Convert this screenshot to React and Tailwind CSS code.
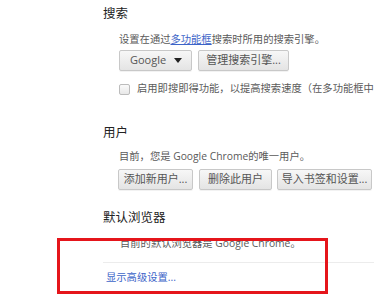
export default function App() {
  const font = { fontFamily: '"Open Sans", "Noto Sans CJK SC", sans-serif' };
  const btn =
    "h-[21px] flex items-center rounded-[2px] border border-[#c8c8c8] bg-gradient-to-b from-[#f7f7f7] to-[#e4e4e4] text-[11px] text-[#555] shadow-[0_1px_0_rgba(0,0,0,0.05)]";

  return (
    <div className="relative w-[374px] h-[302px] bg-white overflow-hidden" style={font}>
      <div className="pl-[103px] pt-[6px]">
        {/* 搜索 */}
        <h3 className="text-[12.5px] leading-[16px] text-[#222]">搜索</h3>
        <div className="pl-[16px]">
          <p className="mt-[9px] text-[10.3px] leading-[16px] text-[#5a5a5a] whitespace-nowrap">
            设置在通过<span className="text-[#3c64c8] underline">多功能框</span>搜索时所用的搜索引擎。
          </p>
          <div className="mt-[3px] flex gap-[6px]">
            <div className={btn + " w-[73px] justify-between pl-[10px] pr-[9px]"}>
              <span>Google</span>
              <svg width="8" height="5" viewBox="0 0 8 5">
                <path d="M0 0h8L4 5z" fill="#222" />
              </svg>
            </div>
            <div className={btn + " w-[91px] justify-center"}>管理搜索引擎...</div>
          </div>
          <div className="mt-[10px] flex items-center gap-[7px] h-[16px] whitespace-nowrap">
            <div className="w-[11px] h-[11px] shrink-0 rounded-[2px] border border-[#bcbcbc] bg-gradient-to-b from-[#fafafa] to-[#e8e8e8]" />
            <span className="text-[10.3px] text-[#5a5a5a]">启用即搜即得功能，以提高搜索速度（在多功能框中</span>
          </div>
        </div>

        {/* 用户 */}
        <h3 className="mt-[28px] text-[12.5px] leading-[16px] text-[#222]">用户</h3>
        <div className="pl-[16px]">
          <p className="mt-[7px] text-[10.3px] leading-[16px] text-[#5a5a5a] whitespace-nowrap">
            目前，您是 Google Chrome的唯一用户。
          </p>
          <div className="mt-[5px] flex gap-[8px] -ml-[1px]">
            <div className={btn + " w-[75px] shrink-0 justify-center"}>添加新用户...</div>
            <div className={btn + " w-[73px] shrink-0 -ml-[2px] justify-center"}>删除此用户</div>
            <div className={btn + " w-[95px] shrink-0 -ml-[3px] justify-center"}>导入书签和设置...</div>
          </div>
        </div>

        {/* 默认浏览器 */}
        <h3 className="mt-[20px] text-[12.5px] leading-[16px] text-[#222]">默认浏览器</h3>
        <p className="mt-[9px] pl-[17px] text-[10.3px] leading-[16px] text-[#5a5a5a] whitespace-nowrap">
          目前的默认浏览器是 Google Chrome。
        </p>
        <div className="mt-[11px] h-px bg-[#ececec]" />
        <a className="block mt-[6px] pl-[3px] text-[10.3px] leading-[16px] text-[#3c64c8]">显示高级设置...</a>
      </div>

      {/* red highlight */}
      <div className="absolute left-[57px] top-[238px] w-[271px] h-[56px] border-[3px] border-[#e5151b]" />
    </div>
  );
}
